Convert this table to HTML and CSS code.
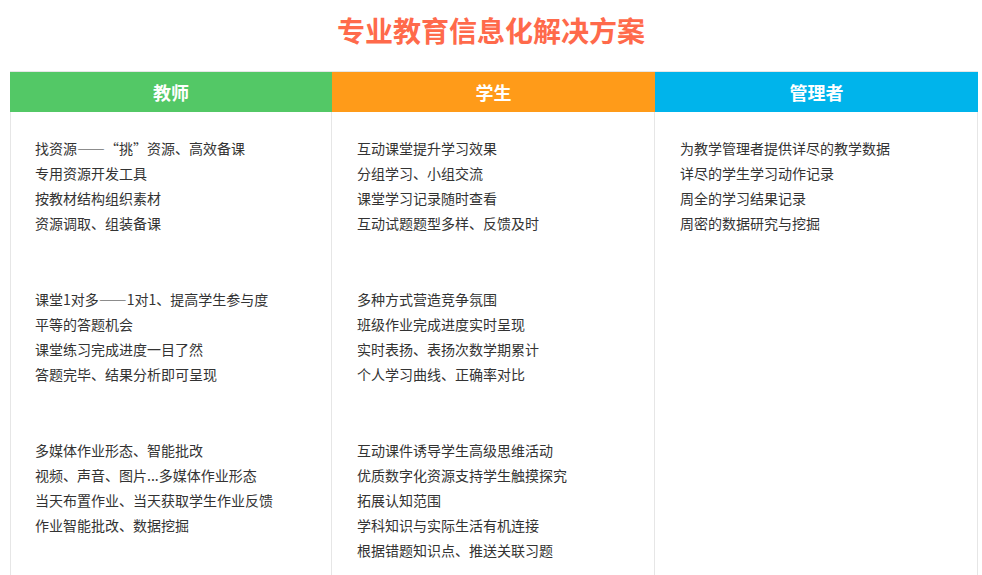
FILE: index.html
```html
<!DOCTYPE html>
<html lang="zh-CN">
<head>
<meta charset="utf-8">
<title>专业教育信息化解决方案</title>
<link rel="stylesheet" href="styles.css">
</head>
<body>
<h1 class="title">专业教育信息化解决方案</h1>
<div class="table">
  <div class="col">
    <div class="head head-green">教师</div>
    <div class="body body-first">
      <ul class="group">
        <li>找资源——“挑”资源、高效备课</li>
        <li>专用资源开发工具</li>
        <li>按教材结构组织素材</li>
        <li>资源调取、组装备课</li>
      </ul>
      <ul class="group">
        <li>课堂1对多——1对1、提高学生参与度</li>
        <li>平等的答题机会</li>
        <li>课堂练习完成进度一目了然</li>
        <li>答题完毕、结果分析即可呈现</li>
      </ul>
      <ul class="group">
        <li>多媒体作业形态、智能批改</li>
        <li>视频、声音、图片...多媒体作业形态</li>
        <li>当天布置作业、当天获取学生作业反馈</li>
        <li>作业智能批改、数据挖掘</li>
      </ul>
    </div>
  </div>
  <div class="col">
    <div class="head head-orange">学生</div>
    <div class="body">
      <ul class="group">
        <li>互动课堂提升学习效果</li>
        <li>分组学习、小组交流</li>
        <li>课堂学习记录随时查看</li>
        <li>互动试题题型多样、反馈及时</li>
      </ul>
      <ul class="group">
        <li>多种方式营造竞争氛围</li>
        <li>班级作业完成进度实时呈现</li>
        <li>实时表扬、表扬次数学期累计</li>
        <li>个人学习曲线、正确率对比</li>
      </ul>
      <ul class="group group-last">
        <li>互动课件诱导学生高级思维活动</li>
        <li>优质数字化资源支持学生触摸探究</li>
        <li>拓展认知范围</li>
        <li>学科知识与实际生活有机连接</li>
        <li>根据错题知识点、推送关联习题</li>
      </ul>
    </div>
  </div>
  <div class="col">
    <div class="head head-blue">管理者</div>
    <div class="body">
      <ul class="group">
        <li>为教学管理者提供详尽的教学数据</li>
        <li>详尽的学生学习动作记录</li>
        <li>周全的学习结果记录</li>
        <li>周密的数据研究与挖掘</li>
      </ul>
    </div>
  </div>
</div>
</body>
</html>
```

FILE: styles.css
```css
* { box-sizing: border-box; }
html, body {
  margin: 0;
  padding: 0;
  background: #fff;
  font-family: "Noto Sans CJK SC", "Noto Sans", sans-serif;
  color: #333;
}
.title {
  margin: 10px 0 0;
  height: 40px;
  line-height: 40px;
  font-size: 28px;
  font-weight: bold;
  color: #ff6a4b;
  text-align: center;
}
.table {
  margin: 21px 0 0 10px;
  width: 968px;
  border-top: 1px solid #e6e6e6;
  display: grid;
  grid-template-columns: 322px 323px 323px;
}
.col {
  display: flex;
  flex-direction: column;
}
.head {
  height: 40px;
  line-height: 40px;
  text-align: center;
  color: #fff;
  font-size: 18px;
  font-weight: bold;
}
.head-green { background: #53c866; }
.head-orange { background: #ff9b19; }
.head-blue { background: #00b4eb; }
.body {
  flex: 1;
  border-right: 1px solid #e6e6e6;
  padding: 24px 0 0 25px;
}
.body-first {
  border-left: 1px solid #e6e6e6;
  padding-left: 24px;
}
.group {
  list-style: none;
  margin: 0 0 51px;
  padding: 0;
}
.group-last {
  margin-bottom: 10px;
}
.group li {
  font-size: 14px;
  line-height: 25px;
  height: 25px;
  white-space: nowrap;
}
```
